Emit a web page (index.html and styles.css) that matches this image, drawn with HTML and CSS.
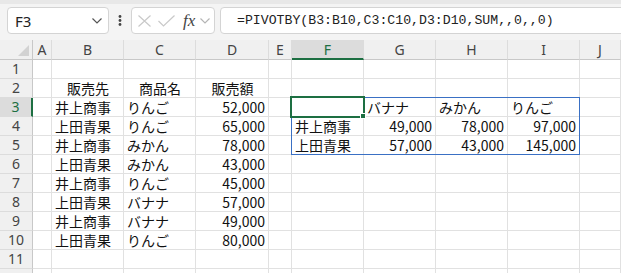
FILE: index.html
```html
<!DOCTYPE html>
<html lang="ja">

<head>
    <meta charset="UTF-8">
    <meta name="viewport" content="width=device-width, initial-scale=1.0">
    <title>PIVOTBY</title>
    <link rel="stylesheet" href="styles.css">
</head>

<body>
    <!-- Formula bar -->
    <div class="toolbar">
        <div class="name-box">
            <span>F3</span>
            <svg class="chev" width="10" height="6" viewBox="0 0 10 6"><polyline points="0.5,0.5 5,5 9.5,0.5" fill="none" stroke="#555" stroke-width="1.2"/></svg>
        </div>
        <svg class="dots" width="22" height="12" viewBox="0 0 22 12"><circle cx="11" cy="1.5" r="1.4" fill="#444"/><circle cx="11" cy="5.5" r="1.4" fill="#444"/><circle cx="11" cy="9.5" r="1.4" fill="#444"/></svg>
        <div class="fx-box">
            <svg width="13" height="12" viewBox="0 0 13 12"><path d="M0.5 0.5 L12.5 11.5 M12.5 0.5 L0.5 11.5" stroke="#c9c9c9" stroke-width="1.2"/></svg>
            <svg width="17" height="12" viewBox="0 0 17 12"><polyline points="0.5,6 5.5,11 16.5,0.5" fill="none" stroke="#c9c9c9" stroke-width="1.2"/></svg>
            <span class="fx">fx</span>
            <svg width="10" height="6" viewBox="0 0 10 6"><polyline points="0.5,0.5 5,5 9.5,0.5" fill="none" stroke="#b5b5b5" stroke-width="1.2"/></svg>
        </div>
        <div class="formula">=PIVOTBY(B3:B10,C3:C10,D3:D10,SUM,,0,,0)</div>
    </div>

    <!-- Sheet -->
    <div class="sheet">
        <div class="corner"></div>
        <div class="ch">A</div><div class="ch">B</div><div class="ch">C</div><div class="ch">D</div><div class="ch">E</div>
        <div class="ch sel">F</div><div class="ch">G</div><div class="ch">H</div><div class="ch">I</div><div class="ch">J</div>

        <div class="rh">1</div>
        <div class="c"></div><div class="c"></div><div class="c"></div><div class="c"></div><div class="c"></div>
        <div class="c"></div><div class="c"></div><div class="c"></div><div class="c"></div><div class="c"></div>

        <div class="rh">2</div>
        <div class="c"></div><div class="c mid">販売先</div><div class="c mid">商品名</div><div class="c mid">販売額</div><div class="c"></div>
        <div class="c"></div><div class="c"></div><div class="c"></div><div class="c"></div><div class="c"></div>

        <div class="rh sel">3</div>
        <div class="c"></div><div class="c">井上商事</div><div class="c">りんご</div><div class="c n">52,000</div><div class="c"></div>
        <div class="c"></div><div class="c">バナナ</div><div class="c">みかん</div><div class="c">りんご</div><div class="c"></div>

        <div class="rh">4</div>
        <div class="c"></div><div class="c">上田青果</div><div class="c">りんご</div><div class="c n">65,000</div><div class="c"></div>
        <div class="c">井上商事</div><div class="c n">49,000</div><div class="c n">78,000</div><div class="c n">97,000</div><div class="c"></div>

        <div class="rh">5</div>
        <div class="c"></div><div class="c">井上商事</div><div class="c">みかん</div><div class="c n">78,000</div><div class="c"></div>
        <div class="c">上田青果</div><div class="c n">57,000</div><div class="c n">43,000</div><div class="c n">145,000</div><div class="c"></div>

        <div class="rh">6</div>
        <div class="c"></div><div class="c">上田青果</div><div class="c">みかん</div><div class="c n">43,000</div><div class="c"></div>
        <div class="c"></div><div class="c"></div><div class="c"></div><div class="c"></div><div class="c"></div>

        <div class="rh">7</div>
        <div class="c"></div><div class="c">井上商事</div><div class="c">りんご</div><div class="c n">45,000</div><div class="c"></div>
        <div class="c"></div><div class="c"></div><div class="c"></div><div class="c"></div><div class="c"></div>

        <div class="rh">8</div>
        <div class="c"></div><div class="c">上田青果</div><div class="c">バナナ</div><div class="c n">57,000</div><div class="c"></div>
        <div class="c"></div><div class="c"></div><div class="c"></div><div class="c"></div><div class="c"></div>

        <div class="rh">9</div>
        <div class="c"></div><div class="c">井上商事</div><div class="c">バナナ</div><div class="c n">49,000</div><div class="c"></div>
        <div class="c"></div><div class="c"></div><div class="c"></div><div class="c"></div><div class="c"></div>

        <div class="rh">10</div>
        <div class="c"></div><div class="c">上田青果</div><div class="c">りんご</div><div class="c n">80,000</div><div class="c"></div>
        <div class="c"></div><div class="c"></div><div class="c"></div><div class="c"></div><div class="c"></div>

        <div class="rh">11</div>
        <div class="c"></div><div class="c"></div><div class="c"></div><div class="c"></div><div class="c"></div>
        <div class="c"></div><div class="c"></div><div class="c"></div><div class="c"></div><div class="c"></div>

        <!-- row 12 is only a sliver at the bottom edge -->
        <div class="rh"></div>
        <div class="c"></div><div class="c"></div><div class="c"></div><div class="c"></div><div class="c"></div>
        <div class="c"></div><div class="c"></div><div class="c"></div><div class="c"></div><div class="c"></div>

        <!-- spill range and active cell -->
        <div class="spill"></div>
        <div class="active"><div class="handle"></div></div>
    </div>
</body>

</html>
```

FILE: styles.css
```css
body {
    margin: 0;
    width: 621px;
    height: 273px;
    overflow: hidden;
    background-color: #fff;
    font-family: "Noto Sans CJK JP", sans-serif;
}

/* Formula bar */
.toolbar {
    display: flex;
    align-items: center;
    height: 40px;
    padding-left: 7px;
    padding-bottom: 3px;
    box-sizing: border-box;
    background-color: #f4f4f4;
    border-top: 4px solid #e8e8e8;
}

.name-box {
    display: flex;
    align-items: center;
    justify-content: space-between;
    width: 102px;
    height: 27px;
    padding: 0 6px 0 7px;
    box-sizing: border-box;
    background-color: #fff;
    border: 1px solid #d4d4d4;
    border-radius: 4px;
    font-family: "Noto Sans", sans-serif;
    font-size: 15px;
    color: #222;
}

.dots {
    display: block;
}

.fx-box {
    display: flex;
    align-items: center;
    width: 84px;
    height: 27px;
    padding-left: 6px;
    box-sizing: border-box;
    background-color: #fff;
    border: 1px solid #d4d4d4;
    border-radius: 4px;
    gap: 9px;
}

.fx-box svg:nth-child(2) {
    margin-left: -2px;
}

.fx {
    font-family: "Liberation Serif", serif;
    font-style: italic;
    font-size: 17px;
    color: #444;
    margin-left: -1px;
    margin-right: -4px;
}

.formula {
    flex: 1;
    height: 27px;
    margin-left: 5px;
    margin-right: -10px;
    padding-left: 16px;
    box-sizing: border-box;
    background-color: #fff;
    border: 1px solid #d4d4d4;
    border-radius: 4px;
    font-family: "Liberation Mono", monospace;
    font-size: 13.2px;
    line-height: 25px;
    color: #222;
    white-space: nowrap;
}

/* Sheet grid */
.sheet {
    position: relative;
    display: grid;
    grid-template-columns: 33px 19px 72px 72px 73px 23px 72px 72px 72px 72px 1fr;
    grid-template-rows: 20px;
    grid-auto-rows: 19px;
    font-size: 14px;
}

.corner,
.ch,
.rh {
    background-color: #f0f0f0;
    box-sizing: border-box;
    font-family: "Noto Sans", sans-serif;
    color: #444;
    font-size: 14px;
}

.corner {
    position: relative;
    border-right: 1px solid #c8c8c8;
    border-bottom: 1px solid #c8c8c8;
}

.corner::after {
    content: "";
    position: absolute;
    right: 3px;
    bottom: 3px;
    border-left: 11px solid transparent;
    border-bottom: 11px solid #d2d2d2;
}

.ch {
    text-align: center;
    line-height: 19px;
    border-right: 1px solid #dcdcdc;
    border-bottom: 1px solid #c8c8c8;
}

.ch.sel {
    background-color: #dcdcdc;
    color: #1d6f42;
    border-bottom: 2px solid #1d6f42;
}

.rh {
    text-align: center;
    line-height: 18px;
    border-right: 1px solid #c8c8c8;
    border-bottom: 1px solid #dcdcdc;
}

.rh.sel {
    background-color: #dcdcdc;
    color: #1d6f42;
    border-right: 2px solid #1d6f42;
}

.c {
    box-sizing: border-box;
    border-right: 1px solid #e1e1e1;
    border-bottom: 1px solid #e1e1e1;
    padding: 0 2px 0 3px;
    line-height: 18px;
    color: #111;
    white-space: nowrap;
    overflow: hidden;
}

.c.mid {
    text-align: center;
}

.c.n {
    text-align: right;
    padding-right: 3px;
}

/* Spill range outline */
.spill {
    position: absolute;
    left: 291px;
    top: 57px;
    width: 289px;
    height: 58px;
    box-sizing: border-box;
    border: 1px solid #3a70c4;
}

/* Active cell */
.active {
    position: absolute;
    left: 290px;
    top: 56px;
    width: 75px;
    height: 22px;
    box-sizing: border-box;
    border: 2px solid #1d6f42;
}

.handle {
    position: absolute;
    right: -3px;
    bottom: -3px;
    width: 6px;
    height: 6px;
    box-sizing: border-box;
    background-color: #1d6f42;
    border: 1px solid #fff;
}
```
